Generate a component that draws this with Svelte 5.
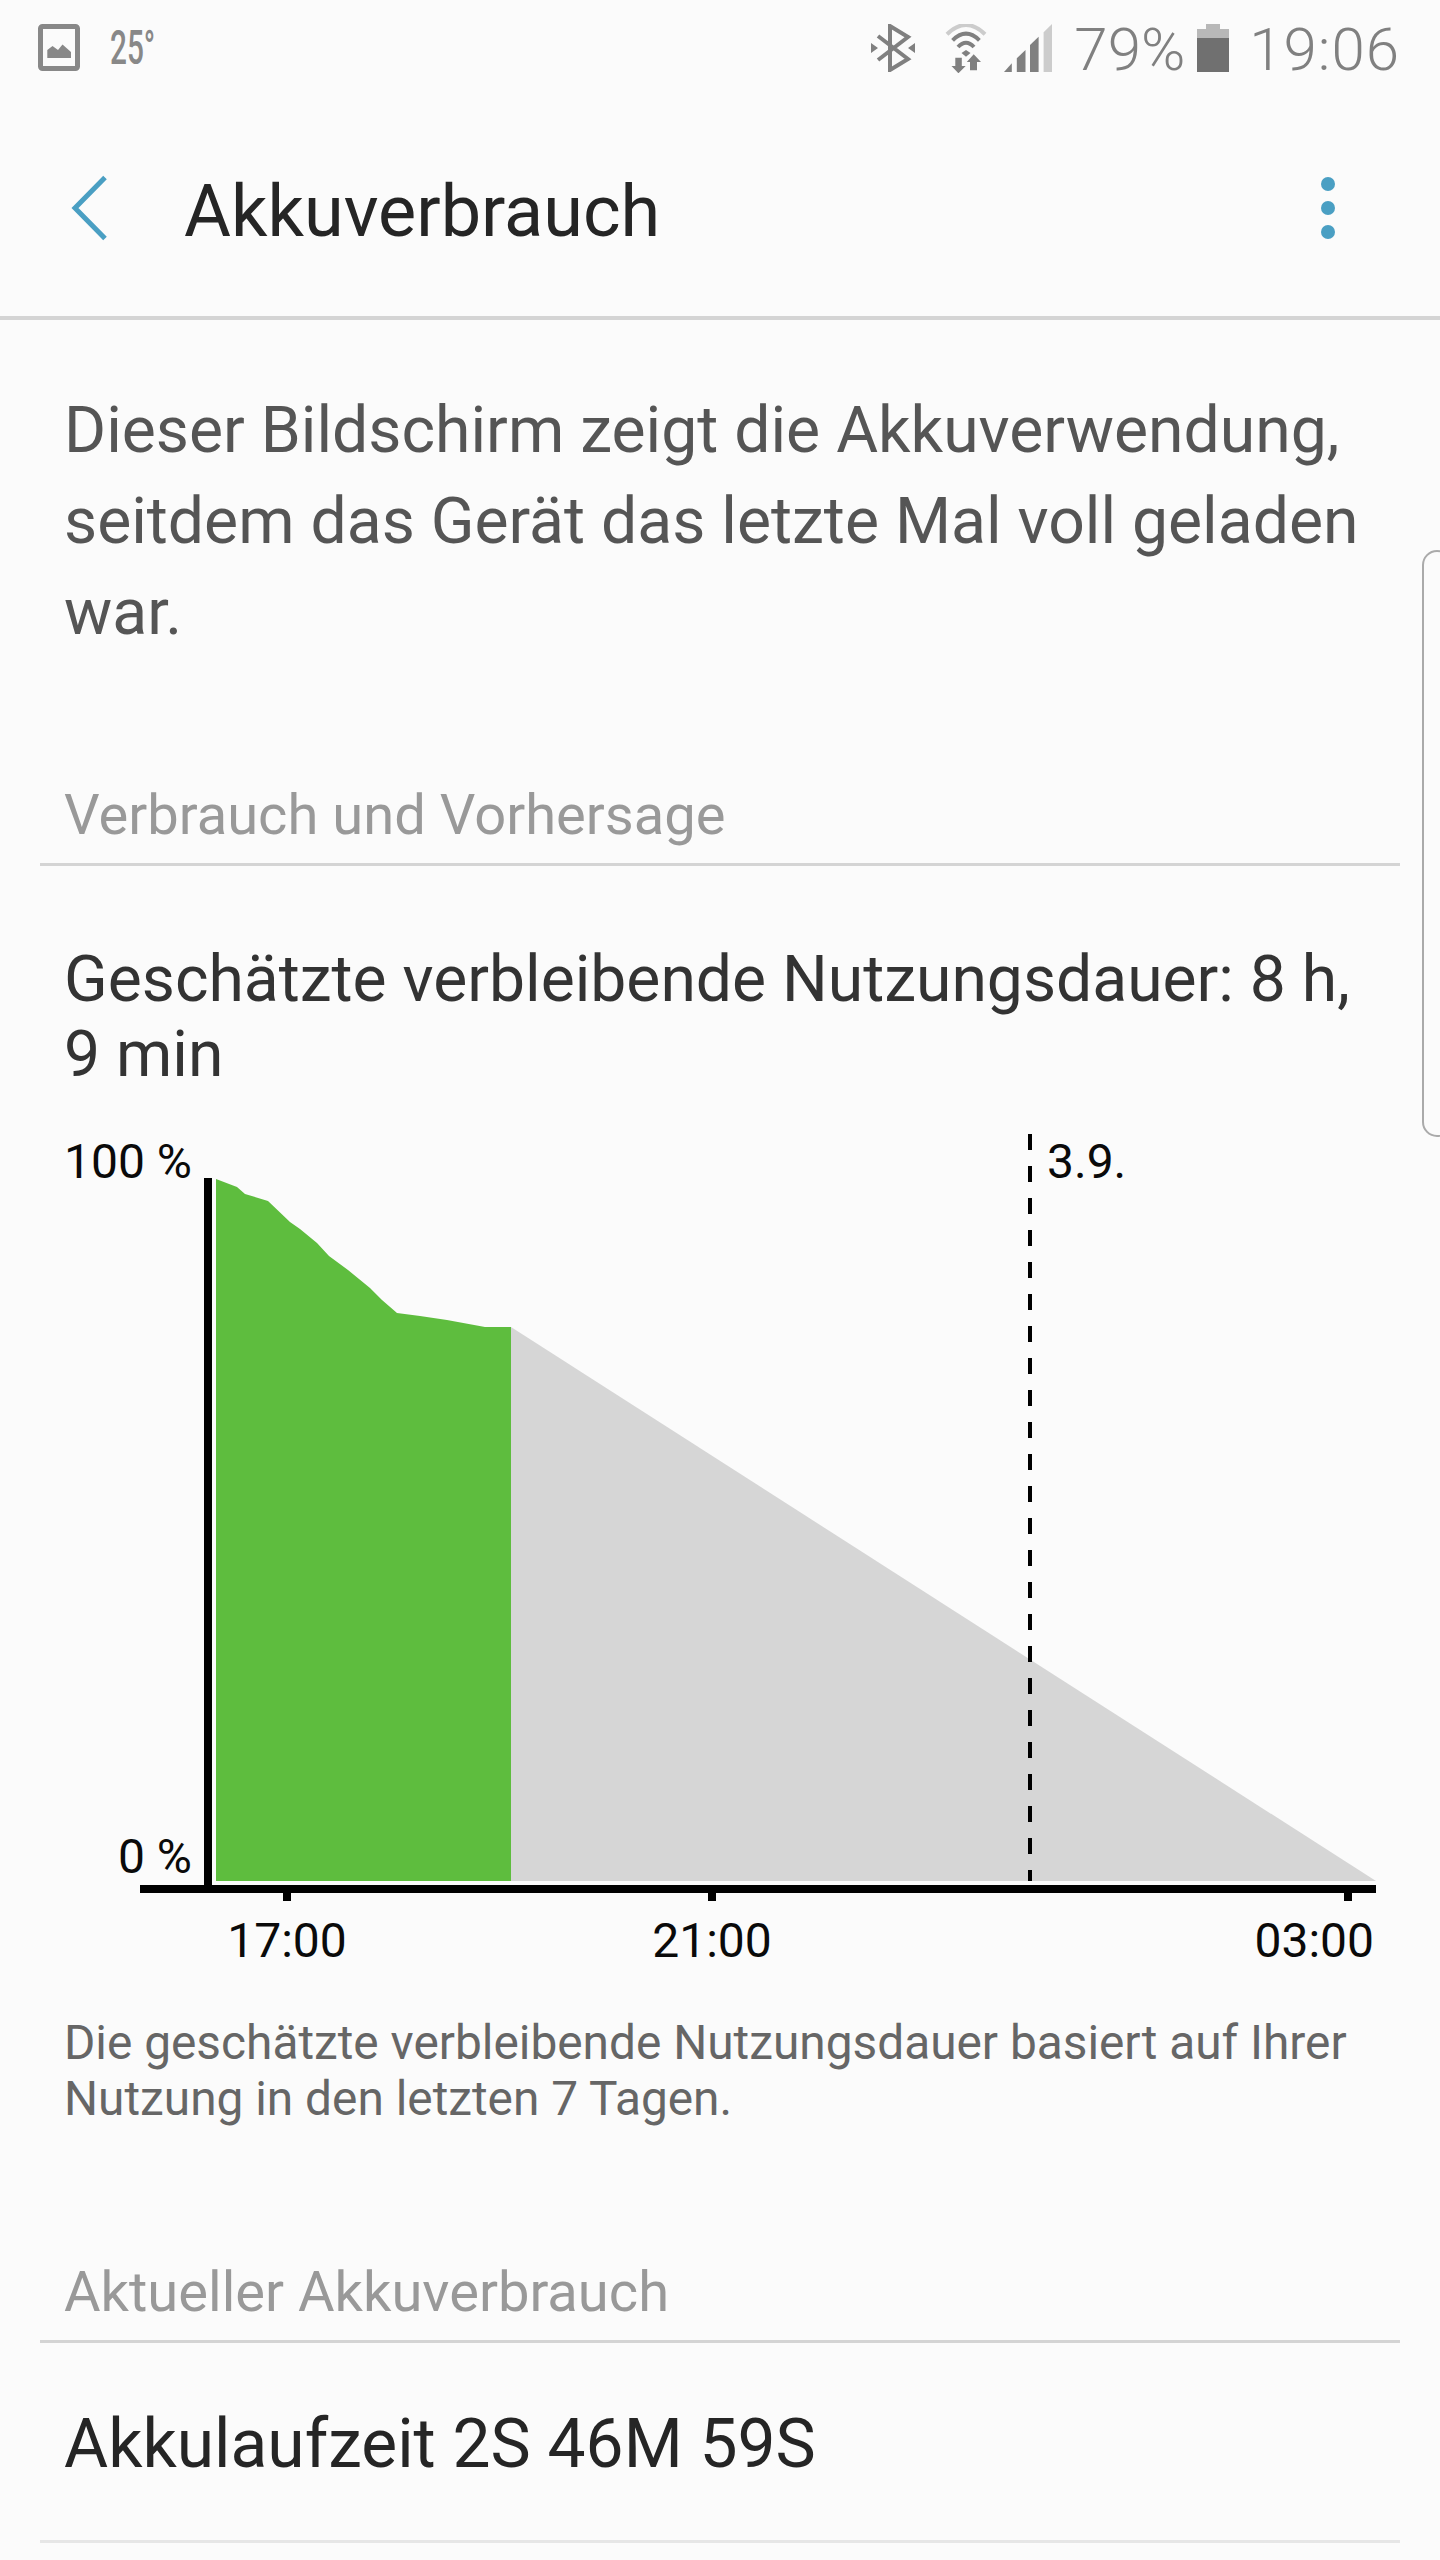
<script>
	// Measured curve of the battery level, in chart coordinates.
	const used = [
		[216, 58], [237, 66], [245, 73], [268, 80], [290, 101], [300, 108],
		[317, 122], [329, 135], [348, 149], [370, 167], [382, 179], [397, 192],
		[420, 195], [447, 199], [485, 206], [511, 206], [511, 760], [216, 760]
	];
	const usedPoints = used.map((p) => p.join(',')).join(' ');
	const ticks = [283, 708, 1344];
</script>

<div class="page">
	<div class="status">
		<svg class="pic" width="42" height="47" viewBox="0 0 42 47">
			<rect x="2.5" y="2.5" width="37" height="42" rx="2" fill="none" stroke="#888" stroke-width="5" />
			<path d="M9.3 34V26L14.5 22 20 26 24.5 20.5 33 28V34Z" fill="#888" />
		</svg>
		<span class="temp">25°</span>

		<svg class="bt" width="44" height="48" viewBox="0 0 44 48">
			<path d="M7 12 37 35 19 46V2L37 13 7 36" fill="none" stroke="#808080" stroke-width="4" />
			<path d="M0 19 7 24 0 29ZM44 19 37 24 44 29Z" fill="#808080" />
		</svg>
		<svg class="wifi" width="42" height="49" viewBox="0 0 42 49">
			<path d="M2 10.3Q21 -8.3 40 10.3" fill="none" stroke="#ccc" stroke-width="4" />
			<path d="M7.6 16.3Q21 3 34.4 16.3" fill="none" stroke="#808080" stroke-width="4" />
			<path d="M13 23Q21 14.4 29 23" fill="none" stroke="#808080" stroke-width="4" />
			<path d="M21 26 25.5 29 21 32.7 16.5 29Z" fill="#808080" />
			<path d="M10.3 33.7H16.8V42H20.7L13.4 49.3 6.5 42H10.3Z" fill="#808080" />
			<path d="M28.7 30.3 36 38H32V46.3H25V38H21.8Z" fill="#808080" />
		</svg>
		<svg class="signal" width="49" height="48" viewBox="0 0 49 48">
			<path d="M1 48 8.8 39.3V48Z" fill="#808080" />
			<path d="M13.8 34.3 22.5 26V48H13.8Z" fill="#808080" />
			<path d="M27 21 35.6 12.7V48H27Z" fill="#808080" />
			<path d="M40.6 8.3 49 0V48H40.6Z" fill="#ccc" />
		</svg>
		<span class="pct">79%</span>
		<svg class="batt" width="32" height="48" viewBox="0 0 32 48">
			<path d="M9 0H23V5H32V14H0V5H9Z" fill="#b8b8b8" />
			<rect y="14" width="32" height="34" fill="#707070" />
		</svg>
		<span class="clock">19:06</span>
	</div>

	<header class="bar">
		<svg class="back" width="40" height="66" viewBox="0 0 40 66">
			<path d="M35 2.5 5 33 35 63.5" fill="none" stroke="#4a9fc3" stroke-width="5" />
		</svg>
		<h1>Akkuverbrauch</h1>
		<div class="more">
			<i></i><i></i><i></i>
		</div>
	</header>

	<p class="intro">Dieser Bildschirm zeigt die Akkuverwendung, seitdem das Gerät das letzte Mal voll geladen war.</p>

	<h2 class="section first">Verbrauch und Vorhersage</h2>

	<p class="estimate">Geschätzte verbleibende Nutzungsdauer: 8 h, 9 min</p>

	<svg class="chart" width="1440" height="860" viewBox="0 0 1440 860">
		<polygon points="511,206 1376,760 511,760" fill="#d6d6d6" />
		<polygon points={usedPoints} fill="#5ebd3e" />
		<rect x="204" y="57" width="8" height="707" fill="#000" />
		<rect x="140" y="764" width="1236" height="8" fill="#000" />
		{#each ticks as x}
			<rect {x} y="772" width="8" height="8" fill="#000" />
		{/each}
		<line x1="1030" y1="13" x2="1030" y2="760" stroke="#000" stroke-width="4" stroke-dasharray="16 16" />
		<text x="64" y="57">100 %</text>
		<text x="192" y="752" text-anchor="end">0 %</text>
		<text x="1047" y="57">3.9.</text>
		<text x="287" y="836" text-anchor="middle">17:00</text>
		<text x="712" y="836" text-anchor="middle">21:00</text>
		<text x="1374" y="836" text-anchor="end">03:00</text>
	</svg>

	<p class="note">Die geschätzte verbleibende Nutzungsdauer basiert auf Ihrer Nutzung in den letzten 7 Tagen.</p>

	<h2 class="section second">Aktueller Akkuverbrauch</h2>

	<div class="row">Akkulaufzeit 2S 46M 59S</div>

	<div class="handle"></div>
</div>

<style>
	:global(body) {
		margin: 0;
		background: #fbfbfb;
	}

	.page {
		position: relative;
		width: 1440px;
		height: 2560px;
		overflow: hidden;
		background: #fbfbfb;
		font-family: Roboto, 'Liberation Sans', sans-serif;
	}

	.status {
		display: flex;
		align-items: flex-start;
		height: 96px;
		padding: 24px 40px 0 38px;
		box-sizing: border-box;
		color: #808080;
	}

	.temp {
		margin-left: 30px;
		font-size: 48px;
		font-weight: 500;
		line-height: 48px;
		color: #888;
		transform: scaleX(0.62);
		transform-origin: left;
	}

	.bt {
		margin-left: auto;
	}

	.wifi {
		margin-left: 30px;
	}

	.signal {
		margin-left: 16px;
	}

	.pct,
	.clock {
		margin-top: 2px;
		font-size: 60px;
		font-weight: 300;
		line-height: 48px;
	}

	.pct {
		margin-left: 22px;
	}

	.batt {
		margin-left: 12px;
	}

	.clock {
		margin-left: 20px;
		letter-spacing: 1px;
	}

	.bar {
		display: flex;
		align-items: center;
		height: 224px;
		padding: 0 0 0 70px;
		box-sizing: border-box;
		border-bottom: 4px solid #d4d4d4;
	}

	.back {
		flex: none;
		margin-top: 4px;
	}

	h1 {
		margin: 10px 0 0 74px;
		font-size: 72px;
		font-weight: 400;
		color: #252525;
	}

	.more {
		display: flex;
		flex-direction: column;
		gap: 10px;
		margin: 4px 105px 0 auto;
	}

	.more i {
		display: block;
		width: 14px;
		height: 14px;
		border-radius: 50%;
		background: #4a9fc3;
	}

	.intro {
		margin: 65px 40px 0 64px;
		font-size: 64.25px;
		line-height: 91px;
		color: #555;
	}

	.section {
		margin: 0 40px;
		padding: 0 0 15px 24px;
		font-size: 56.1px;
		font-weight: 400;
		color: #999;
		border-bottom: 3px solid #d4d4d4;
	}

	.section.first {
		margin-top: 124px;
	}

	.section.second {
		margin-top: 132px;
	}

	.estimate {
		margin: 76px 80px 0 64px;
		font-size: 64.2px;
		line-height: 75px;
		color: #333;
	}

	.chart {
		display: block;
		margin-top: 29px;
	}

	.chart text {
		font-size: 48px;
		fill: #0a0a0a;
	}

	.note {
		margin: 34px 80px 0 64px;
		font-size: 47.8px;
		line-height: 56px;
		color: #666;
	}

	.row {
		margin: 0 40px;
		padding: 0 0 0 24px;
		height: 200px;
		line-height: 202px;
		font-size: 67.7px;
		color: #252525;
		border-bottom: 3px solid #e6e6e6;
		box-sizing: border-box;
	}

	.handle {
		position: absolute;
		left: 1422px;
		top: 550px;
		width: 30px;
		height: 587px;
		box-sizing: border-box;
		border: 2px solid #aaa;
		border-radius: 16px;
	}
</style>
